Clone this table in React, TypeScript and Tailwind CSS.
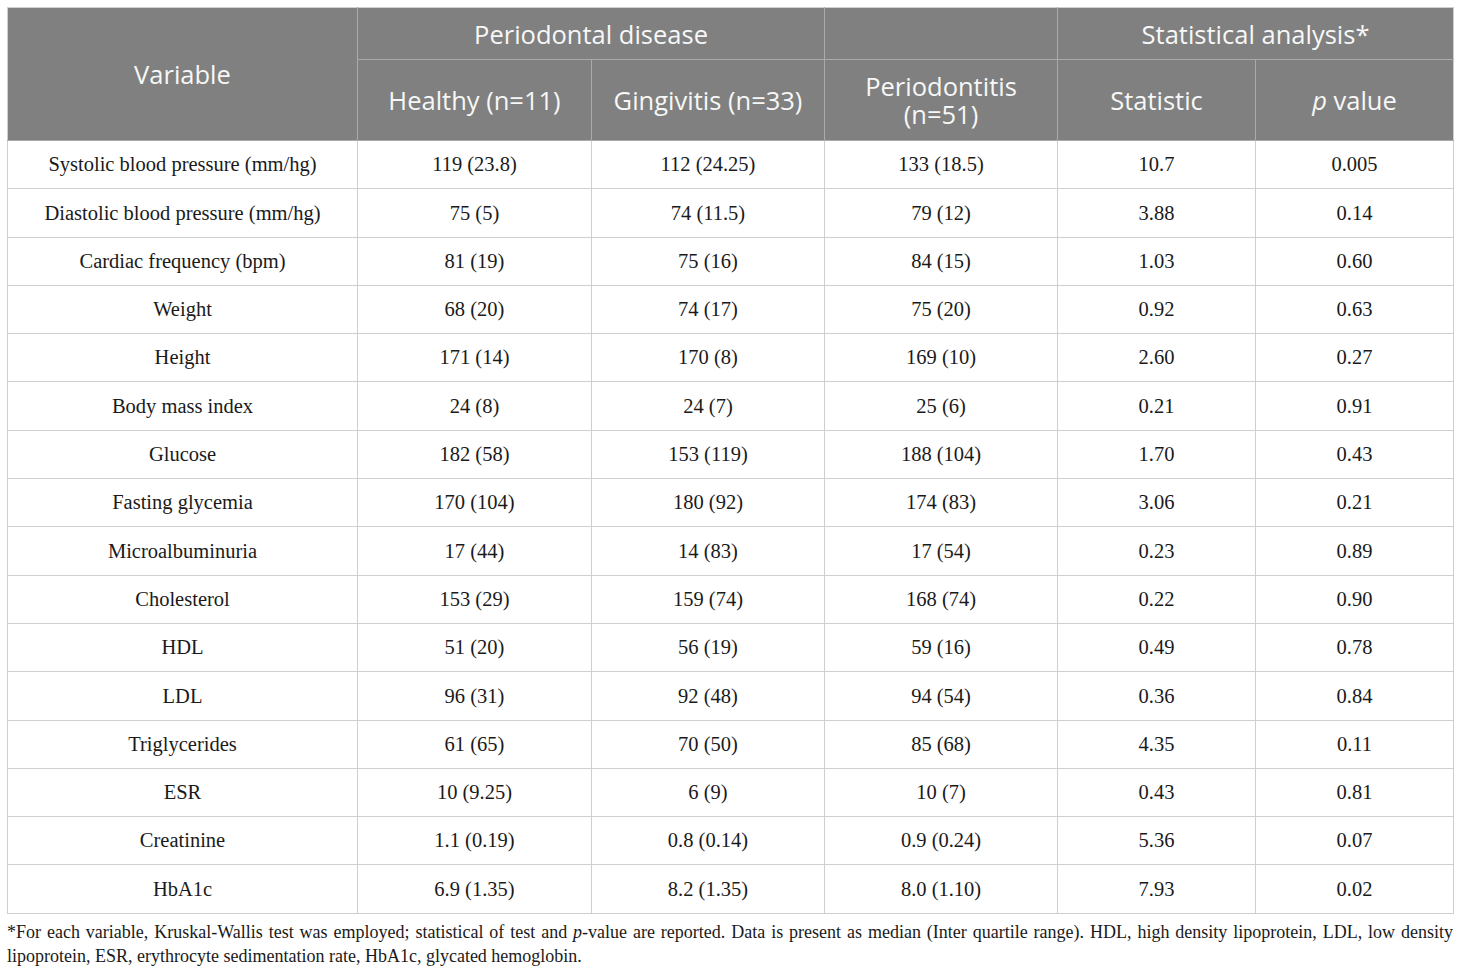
import React from 'react'

const rows: string[][] = [
    ['Systolic blood pressure (mm/hg)', '119 (23.8)', '112 (24.25)', '133 (18.5)', '10.7', '0.005'],
    ['Diastolic blood pressure (mm/hg)', '75 (5)', '74 (11.5)', '79 (12)', '3.88', '0.14'],
    ['Cardiac frequency (bpm)', '81 (19)', '75 (16)', '84 (15)', '1.03', '0.60'],
    ['Weight', '68 (20)', '74 (17)', '75 (20)', '0.92', '0.63'],
    ['Height', '171 (14)', '170 (8)', '169 (10)', '2.60', '0.27'],
    ['Body mass index', '24 (8)', '24 (7)', '25 (6)', '0.21', '0.91'],
    ['Glucose', '182 (58)', '153 (119)', '188 (104)', '1.70', '0.43'],
    ['Fasting glycemia', '170 (104)', '180 (92)', '174 (83)', '3.06', '0.21'],
    ['Microalbuminuria', '17 (44)', '14 (83)', '17 (54)', '0.23', '0.89'],
    ['Cholesterol', '153 (29)', '159 (74)', '168 (74)', '0.22', '0.90'],
    ['HDL', '51 (20)', '56 (19)', '59 (16)', '0.49', '0.78'],
    ['LDL', '96 (31)', '92 (48)', '94 (54)', '0.36', '0.84'],
    ['Triglycerides', '61 (65)', '70 (50)', '85 (68)', '4.35', '0.11'],
    ['ESR', '10 (9.25)', '6 (9)', '10 (7)', '0.43', '0.81'],
    ['Creatinine', '1.1 (0.19)', '0.8 (0.14)', '0.9 (0.24)', '5.36', '0.07'],
    ['HbA1c', '6.9 (1.35)', '8.2 (1.35)', '8.0 (1.10)', '7.93', '0.02'],
]

function App() {
    return (
        <div className="bg-white w-[1460px] h-[975px] pt-[7px] px-[7px]">
            <table className="table-fixed border-collapse w-[1446px]">
                <colgroup>
                    <col className="w-[350px]" />
                    <col className="w-[234px]" />
                    <col className="w-[233px]" />
                    <col className="w-[233px]" />
                    <col className="w-[198px]" />
                    <col className="w-[198px]" />
                </colgroup>
                {/* Header */}
                <thead className="bg-[#7f807f] text-[#f7f7f7] font-['Open_Sans',sans-serif] text-[25.5px] leading-[28px]">
                    <tr className="h-[52px]">
                        <th rowSpan={2} className="font-normal border border-[#a9aaa9] border-l-[#cfcfcf] border-t-[#cfcfcf]">
                            Variable
                        </th>
                        <th colSpan={2} className="font-normal border border-[#a9aaa9] border-t-[#cfcfcf]">
                            Periodontal disease
                        </th>
                        <th className="font-normal border border-[#a9aaa9] border-t-[#cfcfcf]" />
                        <th colSpan={2} className="font-normal border border-[#a9aaa9] border-t-[#cfcfcf] border-r-[#cfcfcf]">
                            Statistical analysis*
                        </th>
                    </tr>
                    <tr className="h-[81px]">
                        <th className="font-normal border border-[#a9aaa9]">Healthy (n=11)</th>
                        <th className="font-normal border border-[#a9aaa9]">Gingivitis (n=33)</th>
                        <th className="font-normal border border-[#a9aaa9]">
                            <div>Periodontitis</div>
                            <div>(n=51)</div>
                        </th>
                        <th className="font-normal border border-[#a9aaa9]">Statistic</th>
                        <th className="font-normal border border-[#a9aaa9] border-r-[#cfcfcf]">
                            <span className="italic">p</span> value
                        </th>
                    </tr>
                </thead>
                {/* Body */}
                <tbody className="font-['Liberation_Serif',serif] text-[20.5px] text-[#1a1a1a]">
                    {rows.map((r) => (
                        <tr key={r[0]} className="h-[48.3px]">
                            {r.map((c, i) => (
                                <td key={i} className="border border-[#cfcfcf] text-center align-middle">
                                    {c}
                                </td>
                            ))}
                        </tr>
                    ))}
                </tbody>
            </table>
            <p className="mt-[6px] w-[1446px] font-['Liberation_Serif',serif] text-[18px] leading-[24px] text-[#1a1a1a] text-justify">
                *For each variable, Kruskal-Wallis test was employed; statistical of test and <span className="italic">p</span>-value are reported. Data is present as median (Inter quartile range). HDL, high density lipoprotein, LDL, low density lipoprotein, ESR, erythrocyte sedimentation rate, HbA1c, glycated hemoglobin.
            </p>
        </div>
    )
}

export default App
